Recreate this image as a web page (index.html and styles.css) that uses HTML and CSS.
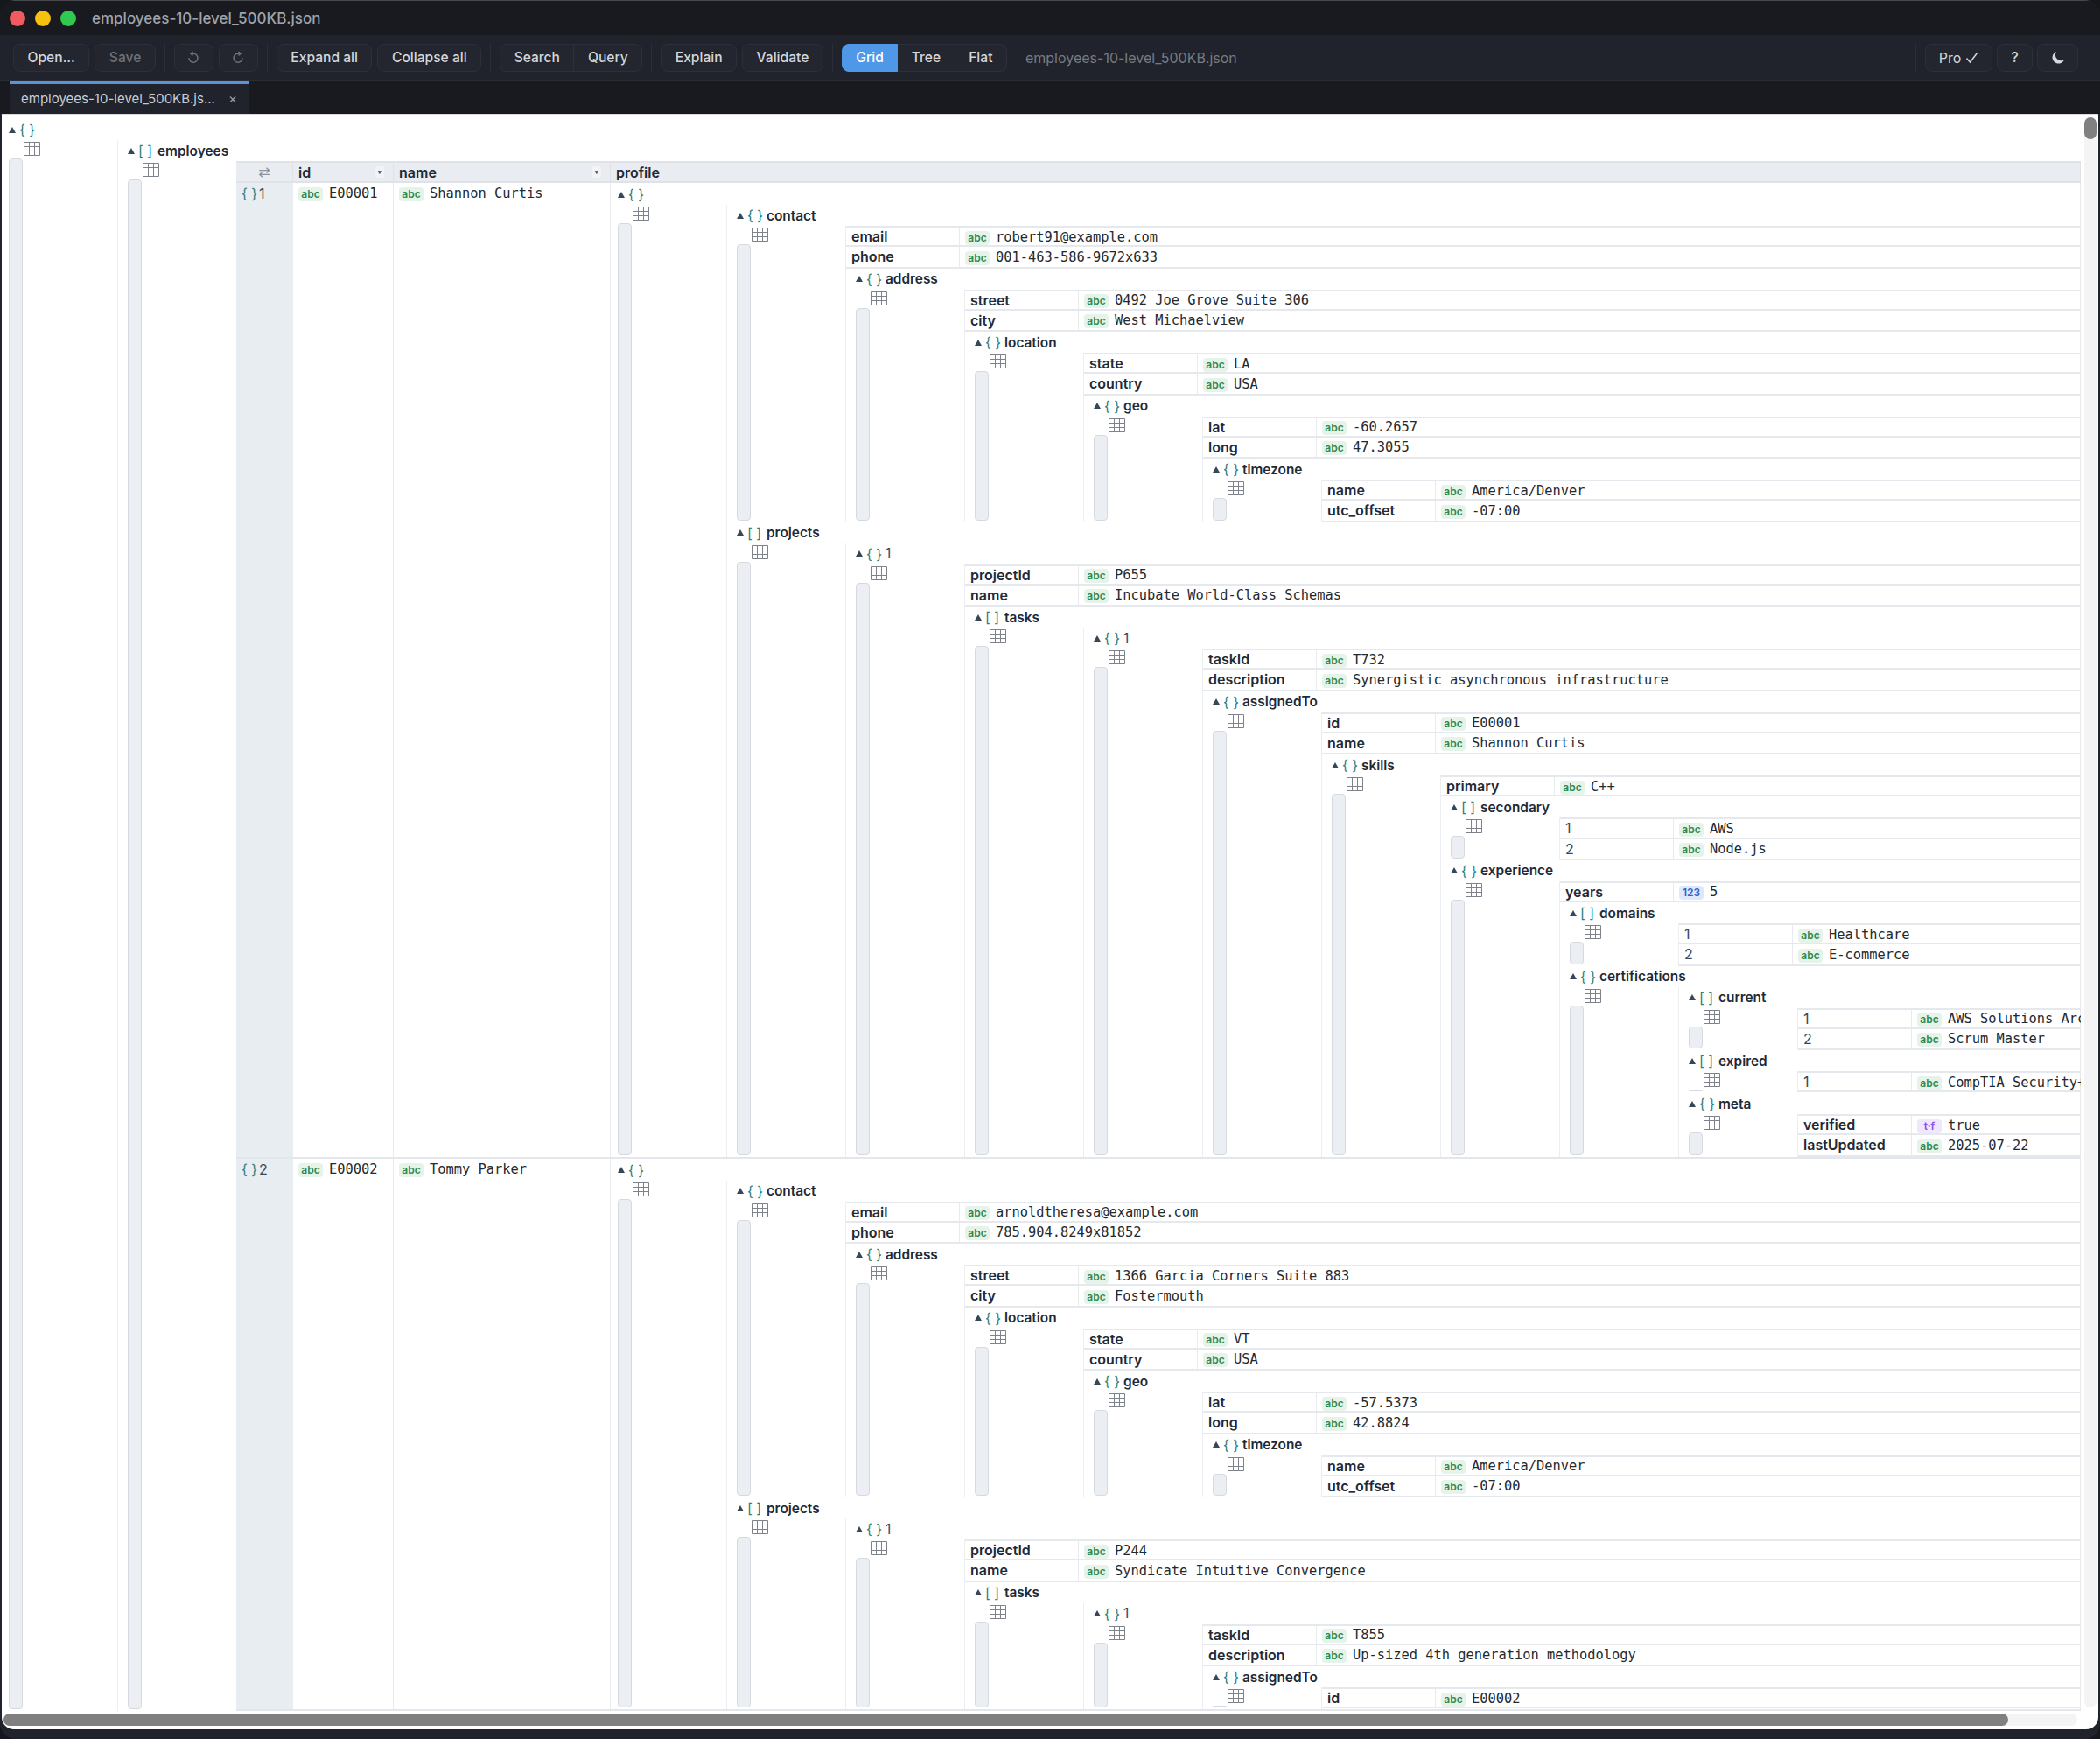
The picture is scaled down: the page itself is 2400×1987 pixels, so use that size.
FILE: index.html
```html
<!DOCTYPE html>
<html lang="en">
<head>
    <meta charset="UTF-8">
    <meta name="viewport" content="width=device-width, initial-scale=1.0">
    <title>employees-10-level_500KB.json</title>
    <link rel="stylesheet" href="styles.css">
</head>
<body>
    <div class="window">
        <div class="titlebar">
            <span class="light red"></span>
            <span class="light yellow"></span>
            <span class="light green"></span>
            <span class="title">employees-10-level_500KB.json</span>
        </div>

        <div class="toolbar">
            <button class="btn">Open...</button>
            <button class="btn off">Save</button>
            <span class="sep"></span>
            <button class="btn icon-btn off">
                <svg width="16" height="16" viewBox="0 0 16 16"><path d="M7.5 1 5 3.2 7.5 5.4M5.2 3.2H8a5 5 0 1 1-5 5"/></svg>
            </button>
            <button class="btn icon-btn off">
                <svg width="16" height="16" viewBox="0 0 16 16"><path d="M8.5 1 11 3.2 8.5 5.4M10.8 3.2H8a5 5 0 1 0 5 5"/></svg>
            </button>
            <span class="sep"></span>
            <button class="btn">Expand all</button>
            <button class="btn">Collapse all</button>
            <span class="sep"></span>
            <div class="btn-group">
                <button class="btn">Search</button>
                <button class="btn">Query</button>
            </div>
            <span class="sep"></span>
            <button class="btn">Explain</button>
            <button class="btn">Validate</button>
            <span class="sep"></span>
            <div class="btn-group">
                <button class="btn active">Grid</button>
                <button class="btn">Tree</button>
                <button class="btn">Flat</button>
            </div>
            <span class="filename">employees-10-level_500KB.json</span>
            <span class="spacer"></span>
            <span class="sep"></span>
            <button class="btn pro">Pro
                <svg width="15" height="14" viewBox="0 0 15 14"><path d="M1.5 7.5 5.5 12 13.5 1.5"/></svg>
            </button>
            <button class="btn help">?</button>
            <button class="btn moon">
                <svg width="16" height="16" viewBox="0 0 16 16"><path d="M6 1a7 7 0 1 0 9 9.2A6.6 6.6 0 0 1 6 1z"/></svg>
            </button>
        </div>

        <div class="tabs">
            <div class="tab">
                <span class="tab-name">employees-10-level_500KB.js...</span>
                <span class="tab-close">×</span>
            </div>
        </div>

        <div class="main">
            <div class="viewport" id="viewport"></div>
            <div class="vscroll"><div class="vthumb"></div></div>
            <div class="hscroll"><div class="hthumb"></div></div>
        </div>
    </div>

    <script src="app.js"></script>
</body>
</html>
```

FILE: styles.css
```css
* { box-sizing: border-box; }

body {
    margin: 0;
    background: #15171b;
    font-family: Inter, "Noto Sans", sans-serif;
}

.window {
    width: 2400px;
    height: 1987px;
    display: flex;
    flex-direction: column;
    background: #20232b;
    border-radius: 18px;
    overflow: hidden;
}

/* title bar */
.titlebar {
    height: 40px;
    flex: none;
    display: flex;
    align-items: center;
    padding-left: 11px;
    background: #181a1f;
    border-top: 1px solid #47494d;
}
.light {
    width: 18px;
    height: 18px;
    border-radius: 50%;
    margin-right: 11px;
}
.red { background: #ee5b60; }
.yellow { background: #f6c20f; }
.green { background: #2fc94f; }
.title {
    margin-left: 7px;
    color: #a0a3a9;
    font-size: 17px;
    font-weight: 500;
}

/* toolbar */
.toolbar {
    height: 53px;
    flex: none;
    display: flex;
    align-items: center;
    gap: 6px;
    padding: 0 25px 0 15px;
    background: #20232b;
    border-bottom: 2px solid #2a2d35;
}
.btn {
    height: 32px;
    padding: 0 15.5px;
    display: flex;
    align-items: center;
    background: #23262e;
    border: 1px solid #2d3038;
    border-radius: 8px;
    color: #d3d6db;
    font-family: inherit;
    font-size: 15.6px;
    font-weight: 500;
}
.btn svg { fill: none; stroke: currentColor; stroke-width: 1.5; }
.off { color: #6e7179; }
.icon-btn { width: 45px; padding: 0; justify-content: center; }
.btn-group { display: flex; height: 32px; }
.btn-group .btn { border-radius: 0; border-left-width: 0; }
.btn-group .btn:first-child { border-radius: 8px 0 0 8px; border-left-width: 1px; }
.btn-group .btn:last-child { border-radius: 0 8px 8px 0; }
.btn.active {
    background: #4f98e8;
    border-color: #4f98e8;
    color: #fff;
}
.sep {
    width: 1px;
    height: 32px;
    margin: 0 4px;
    background: #2b2e36;
}
.filename {
    margin-left: 15px;
    color: #777a82;
    font-size: 16px;
}
.spacer { flex: 1; }
.pro { width: 77px; padding: 0; justify-content: center; gap: 5px; font-size: 16px; font-weight: 400; }
.help { width: 41px; margin-left: -1px; padding: 0; justify-content: center; }
.moon { width: 47px; margin-left: -1px; padding: 0; justify-content: center; }
.moon svg { fill: #d6d9df; stroke: none; }

/* tabs */
.tabs {
    height: 37px;
    flex: none;
    padding-left: 11px;
    background: #181a1f;
}
.tab {
    width: 274px;
    height: 37px;
    display: flex;
    align-items: center;
    justify-content: space-between;
    padding: 0 14px 2px 13px;
    background: #20232b;
    border-top: 3px solid #5b93d6;
    color: #c9ccd2;
    font-size: 15px;
}
.tab-close { color: #9a9da3; font-size: 15px; }

/* content */
.main {
    position: relative;
    flex: none;
    height: 1846px;
    margin: 0 2px;
    background: #fff;
    border-radius: 0 0 14px 14px;
    border-top: 1px solid #d8dade;
}
.viewport {
    width: 2376px;
    height: 1824px;
    overflow: hidden;
    padding: 5px 0 0 7px;
}

.vscroll {
    position: absolute;
    top: 3px;
    left: 2380px;
    width: 14px;
    height: 1817px;
    background: #f4f4f4;
    border-radius: 7px;
}
.vthumb {
    height: 25px;
    background: #808080;
    border-radius: 7px;
}
.hscroll {
    position: absolute;
    top: 1827px;
    left: 2px;
    width: 2370px;
    height: 14px;
    background: #f4f4f4;
    border-radius: 7px;
}
.hthumb {
    width: 2291px;
    height: 14px;
    background: #808080;
    border-radius: 7px;
}

/* json nodes */
.head {
    height: 24px;
    display: flex;
    align-items: center;
    white-space: nowrap;
}
.arrow {
    width: 10px;
    display: flex;
    justify-content: center;
}
.arrow::before {
    content: "";
    border-left: 4px solid transparent;
    border-right: 4px solid transparent;
    border-bottom: 7px solid #36475a;
}
.brace {
    width: 16px;
    margin-left: 3px;
    margin-right: 6px;
    color: #2c7f7a;
    font-size: 16px;
    text-align: center;
    white-space: nowrap;
}
.key {
    color: #1f2a37;
    font-size: 15.4px;
    font-weight: 600;
}
.key.index { font-weight: 400; color: #36475a; }

.body {
    display: grid;
    grid-template-columns: 125px minmax(0, 1fr);
}
.side {
    display: flex;
    flex-direction: column;
    min-height: 0;
}
.grid-icon {
    flex: none;
    display: block;
    margin: 2px 0 3px 18px;
    fill: none;
    stroke: #7d828b;
}
.bar {
    flex: 1;
    width: 16px;
    margin: 0 0 2px 1px;
    background: #ebeef2;
    border: 1px solid #d6dae0;
    border-radius: 4px;
}
.content {
    min-width: 0;
    border-left: 1px solid #eceef1;
}
.content > .node { padding-left: 10px; }

/* key / value rows */
.row {
    height: 24.25px;
    display: flex;
    align-items: center;
    white-space: nowrap;
    border-bottom: 2px solid #e5e8ec;
}
.content > .row:first-child { border-top: 2px solid #e5e8ec; }
.row-key {
    width: 130px;
    height: 100%;
    flex: none;
    display: flex;
    align-items: center;
    padding-left: 6px;
    border-right: 1px solid #e8eaee;
    color: #1f2a37;
    font-size: 16px;
    font-weight: 600;
}
.row-key.index { font-weight: 400; color: #36475a; }
.value {
    display: flex;
    align-items: center;
    padding: 1px 0 0 6px;
    color: #24292f;
    font-family: "DejaVu Sans Mono", monospace;
    font-size: 15.36px;
}
.chip {
    width: 28px;
    height: 16px;
    flex: none;
    margin: 2px 7px 0 0;
    border-radius: 4px;
    font-family: Inter, sans-serif;
    font-size: 12px;
    font-weight: 600;
    line-height: 16px;
    text-align: center;
}
.chip.abc { background: #e5f3e9; color: #2d8a54; }
.chip.num { background: #dde9fb; color: #2f62d3; }
.chip.tf { background: #efe7fd; color: #8a4fe8; }

/* employees table */
.table { margin-left: -1px; }
.tr {
    display: grid;
    grid-template-columns: 65px 115px 248px minmax(0, 1fr);
}
.th {
    height: 25px;
    display: flex;
    align-items: center;
    justify-content: space-between;
    padding: 0 10px 0 6px;
    background: #e9edf1;
    border-top: 2px solid #dfe3e8;
    border-bottom: 2px solid #dfe3e8;
    border-right: 1px solid #dfe3e8;
    color: #1f2a37;
    font-size: 16px;
    font-weight: 600;
}
.th:first-child { justify-content: center; padding: 0; color: #8b94a0; font-weight: 400; font-family: "DejaVu Sans", sans-serif; }
.sort {
    width: 10px;
    height: 13px;
    background: #f1f3f6;
    border-radius: 2px;
    color: #36475a;
    font-size: 7px;
    line-height: 13px;
    text-align: center;
}
.tr.data { border-bottom: 2px solid #e3e6ea; }
.td {
    padding-left: 6px;
    border-right: 1px solid #e8eaee;
}
.td > .value { padding: 3px 0 0; }
.td-index {
    display: flex;
    align-items: flex-start;
    padding: 2px 0 0 6px;
    background: #e8edf2;
    border-right: 0;
    height: 100%;
}
.td-index .brace { margin: 0 4px 0 0; }
.td-index .key { line-height: 20px; font-size: 16px; }
.td-profile { padding: 1px 0 0 7px; min-width: 0; }
```

FILE: app.js
```js
// sample of the opened file, only as far as the window shows it
const people = [
    {
        id: 'E00001',
        name: 'Shannon Curtis',
        profile: {
            contact: {
                email: 'robert91@example.com',
                phone: '001-463-586-9672x633',
                address: {
                    street: '0492 Joe Grove Suite 306',
                    city: 'West Michaelview',
                    location: {
                        state: 'LA',
                        country: 'USA',
                        geo: {
                            lat: '-60.2657',
                            long: '47.3055',
                            timezone: { name: 'America/Denver', utc_offset: '-07:00' }
                        }
                    }
                }
            },
            projects: [{
                projectId: 'P655',
                name: 'Incubate World-Class Schemas',
                tasks: [{
                    taskId: 'T732',
                    description: 'Synergistic asynchronous infrastructure',
                    assignedTo: {
                        id: 'E00001',
                        name: 'Shannon Curtis',
                        skills: {
                            primary: 'C++',
                            secondary: ['AWS', 'Node.js'],
                            experience: {
                                years: 5,
                                domains: ['Healthcare', 'E-commerce'],
                                certifications: {
                                    current: ['AWS Solutions Architect', 'Scrum Master'],
                                    expired: ['CompTIA Security+'],
                                    meta: { verified: true, lastUpdated: '2025-07-22' }
                                }
                            }
                        }
                    }
                }]
            }]
        }
    },
    {
        id: 'E00002',
        name: 'Tommy Parker',
        profile: {
            contact: {
                email: 'arnoldtheresa@example.com',
                phone: '785.904.8249x81852',
                address: {
                    street: '1366 Garcia Corners Suite 883',
                    city: 'Fostermouth',
                    location: {
                        state: 'VT',
                        country: 'USA',
                        geo: {
                            lat: '-57.5373',
                            long: '42.8824',
                            timezone: { name: 'America/Denver', utc_offset: '-07:00' }
                        }
                    }
                }
            },
            projects: [{
                projectId: 'P244',
                name: 'Syndicate Intuitive Convergence',
                tasks: [{
                    taskId: 'T855',
                    description: 'Up-sized 4th generation methodology',
                    assignedTo: { id: 'E00002' }
                }]
            }]
        }
    }
];

const gridIcon = `<svg class="grid-icon" width="19" height="16" viewBox="0 0 19 16">
    <path d="M.5.5h18v15H.5zM6.5.5v15M12.5.5v15M.5 5.5h18M.5 10.5h18"/></svg>`;

function chip(value) {
    if (typeof value === 'number') return '<span class="chip num">123</span>';
    if (typeof value === 'boolean') return '<span class="chip tf">t·f</span>';
    return '<span class="chip abc">abc</span>';
}

function valueCell(value) {
    return `<div class="value">${chip(value)}<span>${value}</span></div>`;
}

function isLeaf(value) {
    return typeof value !== 'object';
}

function children(value) {
    const isArray = Array.isArray(value);
    return Object.keys(value).map((k, i) => {
        const label = isArray ? i + 1 : k;
        if (!isLeaf(value[k])) return renderNode(label, value[k], isArray);
        return `<div class="row">
            <div class="row-key${isArray ? ' index' : ''}">${label}</div>
            ${valueCell(value[k])}
        </div>`;
    }).join('');
}

function renderHead(label, value, isIndex) {
    const brace = Array.isArray(value) ? '[ ]' : '{ }';
    const key = label === '' ? '' : `<span class="key${isIndex ? ' index' : ''}">${label}</span>`;
    return `<div class="head"><span class="arrow"></span><span class="brace">${brace}</span>${key}</div>`;
}

function renderBody(inner) {
    return `<div class="body">
        <div class="side">${gridIcon}<div class="bar"></div></div>
        <div class="content">${inner}</div>
    </div>`;
}

function renderNode(label, value, isIndex) {
    return `<div class="node">${renderHead(label, value, isIndex)}${renderBody(children(value))}</div>`;
}

function renderTable(list) {
    const sort = '<span class="sort">▾</span>';
    const rows = list.map((p, i) => `<div class="tr data">
        <div class="td td-index"><span class="brace">{ }</span><span class="key index">${i + 1}</span></div>
        <div class="td">${valueCell(p.id)}</div>
        <div class="td">${valueCell(p.name)}</div>
        <div class="td td-profile">${renderNode('', p.profile)}</div>
    </div>`).join('');

    return `<div class="table">
        <div class="tr">
            <div class="th">⇄</div>
            <div class="th">id${sort}</div>
            <div class="th">name${sort}</div>
            <div class="th">profile</div>
        </div>
        ${rows}
    </div>`;
}

const employees = `<div class="node">${renderHead('employees', people)}${renderBody(renderTable(people))}</div>`;

document.getElementById('viewport').innerHTML =
    `<div class="node">${renderHead('', {})}${renderBody(employees)}</div>`;
```
